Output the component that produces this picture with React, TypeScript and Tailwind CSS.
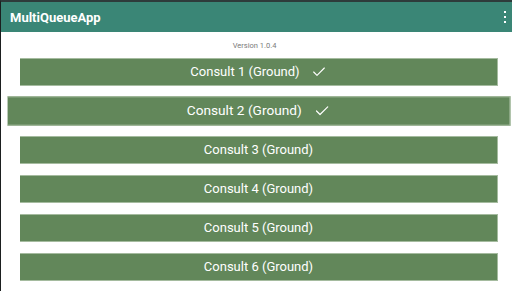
import { Check } from 'lucide-react'

const consults = [
  { id: 1, done: true },
  { id: 2, done: true, active: true },
  { id: 3, done: false },
  { id: 4, done: false },
  { id: 5, done: false },
  { id: 6, done: false },
]

export default function App() {
  return (
    <div
      className="w-[512px] h-[291px] overflow-hidden bg-white border-l border-l-[#1b1f1f] border-t-2 border-t-[#2e3b3b] flex flex-col"
      style={{ fontFamily: 'Roboto, "Liberation Sans", sans-serif' }}
    >
      {/* Barra superior */}
      <header className="h-[30px] bg-[#3a8676] flex items-center justify-between pl-[9px] pr-[4px] flex-shrink-0">
        <h1 className="text-white font-bold text-[13px] leading-none">MultiQueueApp</h1>
        <svg width="6" height="14" viewBox="0 0 6 14" className="text-white">
          <rect x="2" y="1" width="2" height="2" fill="currentColor" />
          <rect x="2" y="6" width="2" height="2" fill="currentColor" />
          <rect x="2" y="11" width="2" height="2" fill="currentColor" />
        </svg>
      </header>

      <p className="text-center text-[7.5px] text-[#7a7a7a] leading-none pt-[10px] pb-[8px] pr-[4px]">Version 1.0.4</p>

      {/* Consultórios */}
      <div className="flex flex-col gap-[11px] pl-[19px] pr-[14px]">
        {consults.map((c) => (
          <button
            key={c.id}
            className={
              'h-[28px] w-full flex items-center justify-center gap-[11px] bg-[#62875a] border-t border-b border-r border-[#a5bb9f] text-white text-[13px] ' +
              (c.active ? 'scale-x-[1.052] scale-y-[1.05]' : '')
            }
          >
            <span>Consult {c.id} (Ground)</span>
            {c.done && <Check size={16} strokeWidth={1.7} className="text-white" />}
          </button>
        ))}
      </div>
    </div>
  )
}
